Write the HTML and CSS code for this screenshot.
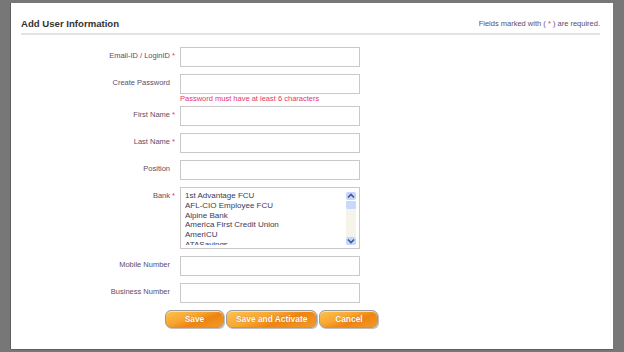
FILE: index.html
```html
<!DOCTYPE html>
<html lang="en">
<head>
  <meta charset="UTF-8">
  <meta name="viewport" content="width=device-width, initial-scale=1.0">
  <title>Add User Information</title>
  <link rel="stylesheet" href="styles.css">
</head>
<body>
  <div class="frame">
    <div class="page-head">
      <h1>Add User Information</h1>
      <p class="note">Fields marked with ( <span class="req">*</span> ) are required.</p>
    </div>

    <form class="user-form">
      <div class="field">
        <label for="email">Email-ID / LoginID</label><span class="star">*</span>
        <input type="text" id="email">
      </div>

      <div class="field with-hint">
        <label for="password">Create Password</label><span class="star"></span>
        <div class="input-wrap">
          <input type="password" id="password">
          <div class="hint">Password must have at least 6 characters</div>
        </div>
      </div>

      <div class="field">
        <label for="firstName">First Name</label><span class="star">*</span>
        <input type="text" id="firstName">
      </div>

      <div class="field">
        <label for="lastName">Last Name</label><span class="star">*</span>
        <input type="text" id="lastName">
      </div>

      <div class="field">
        <label for="position">Position</label><span class="star"></span>
        <input type="text" id="position">
      </div>

      <div class="field">
        <label>Bank</label><span class="star">*</span>
        <div class="listbox">
          <ul class="options">
            <li>1st Advantage FCU</li>
            <li>AFL-CIO Employee FCU</li>
            <li>Alpine Bank</li>
            <li>America First Credit Union</li>
            <li>AmeriCU</li>
            <li>ATASavings</li>
          </ul>
          <div class="scrollbar">
            <div class="sb-btn">
              <svg width="8" height="6" viewBox="0 0 8 6"><path d="M1 4.5 L4 1.5 L7 4.5" fill="none" stroke="#3f5a8c" stroke-width="1.6"/></svg>
            </div>
            <div class="sb-thumb"></div>
            <div class="sb-track"></div>
            <div class="sb-btn">
              <svg width="8" height="6" viewBox="0 0 8 6"><path d="M1 1.5 L4 4.5 L7 1.5" fill="none" stroke="#3f5a8c" stroke-width="1.6"/></svg>
            </div>
          </div>
        </div>
      </div>

      <div class="field">
        <label for="mobile">Mobile Number</label><span class="star"></span>
        <input type="text" id="mobile">
      </div>

      <div class="field">
        <label for="business">Business Number</label><span class="star"></span>
        <input type="text" id="business">
      </div>

      <div class="actions">
        <button type="button">Save</button>
        <button type="button">Save and Activate</button>
        <button type="button">Cancel</button>
      </div>
    </form>
  </div>
</body>
</html>
```

FILE: styles.css
```css
:root {
  --label: #5c4e68;
  --req: #e8336b;
  --line: #c9c9c9;
}

body {
  margin: 0;
  background-color: #777;
  font-family: 'Liberation Sans', Arial, sans-serif;
}

.frame {
  margin: 3px 11px;
  height: 346px;
  background-color: white;
  box-shadow: -1px 0 0 #5e5e5e, 0 1px 0 #5e5e5e;
  overflow: hidden;
}

.page-head {
  display: flex;
  justify-content: space-between;
  align-items: center;
  margin: 0 13px 0 10px;
  padding-top: 15px;
  padding-bottom: 3px;
  border-bottom: 2px solid #e4e4e4;
}

h1 {
  margin: 0;
  font-size: 9.6px;
  line-height: 12px;
  font-weight: bold;
  color: #333;
}

.note {
  margin: 0;
  font-size: 7.5px;
  line-height: 12px;
  color: var(--label);
}

.req,
.star {
  color: var(--req);
}

.user-form {
  padding: 12px 0 0 10px;
}

.field {
  display: flex;
  align-items: flex-start;
  margin-bottom: 7px;
}

.field.with-hint {
  margin-bottom: 3px;
}

.field label {
  width: 149px;
  text-align: right;
  padding-top: 3.5px;
  font-size: 7.5px;
  line-height: 9px;
  color: var(--label);
}

.star {
  width: 10px;
  box-sizing: border-box;
  padding: 3.5px 0 0 2px;
  font-size: 7.5px;
  line-height: 9px;
}

input[type="text"],
input[type="password"] {
  display: block;
  width: 180px;
  height: 20px;
  box-sizing: border-box;
  margin: 0;
  border: 1px solid var(--line);
  background-color: white;
}

.hint {
  font-size: 7.5px;
  line-height: 9px;
  color: var(--req);
}

.listbox {
  display: flex;
  width: 180px;
  height: 62px;
  box-sizing: border-box;
  border: 1px solid var(--line);
  padding: 3px 3px 3px 4px;
}

.options {
  flex: 1;
  margin: 0;
  padding: 0;
  list-style: none;
  overflow: hidden;
  font-size: 8px;
  line-height: 9.8px;
  color: #3b3a58;
}

.scrollbar {
  width: 10px;
  display: flex;
  flex-direction: column;
  margin-top: 1px;
}

.sb-btn {
  height: 8px;
  display: flex;
  align-items: center;
  justify-content: center;
  background-color: #c5d5fb;
  border-radius: 2px;
}

.sb-thumb {
  height: 8px;
  margin-top: 1px;
  background-color: #c9d8fb;
  border-radius: 1px;
}

.sb-track {
  flex: 1;
  background-color: #f5f4ea;
}

.actions {
  display: flex;
  gap: 2px;
  padding-left: 144px;
}

button {
  min-width: 59px;
  height: 18px;
  padding: 0 9px;
  border: 1px solid #9c9c9c;
  border-radius: 6px;
  background: linear-gradient(160deg, #fbc24f 0%, #f7a630 40%, #ee8412 62%, #f39a28 100%);
  box-shadow: inset 0 1px 0 #fde3ae, 1px 1px 0 #c0c0c0;
  color: white;
  font-family: 'Liberation Sans', Arial, sans-serif;
  font-size: 8.4px;
  font-weight: bold;
  text-shadow: 0 0 1px #c0600a;
  cursor: pointer;
}
```
